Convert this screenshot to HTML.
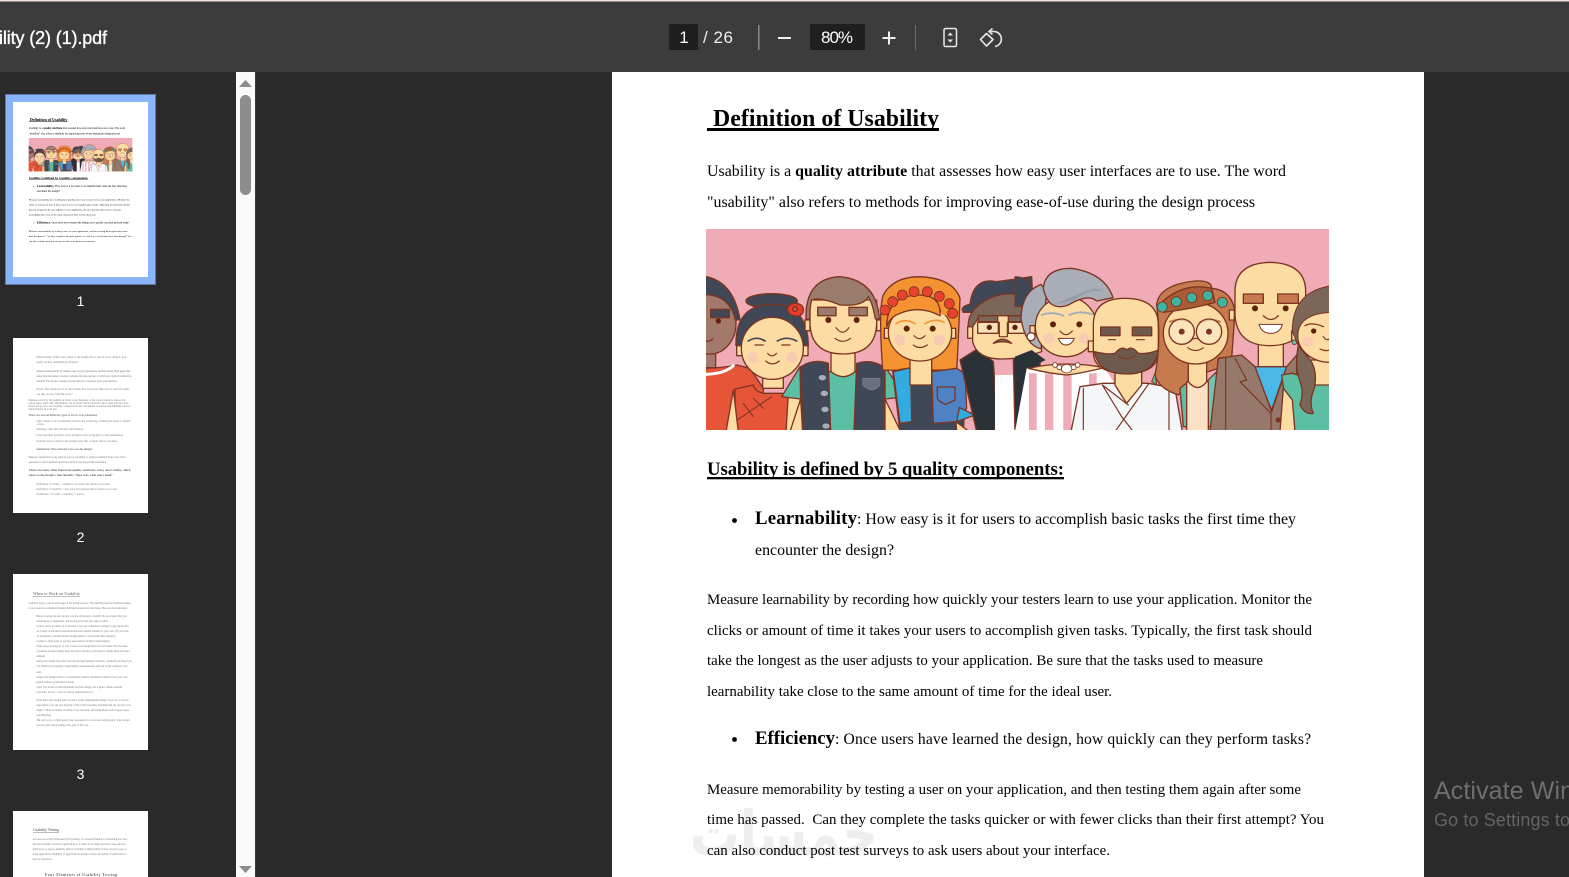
<!DOCTYPE html>
<html lang="en">
<head>
<meta charset="utf-8">
<title>Usability PDF</title>
<style>
html,body{margin:0;padding:0;width:1569px;height:877px;overflow:hidden;background:#2a2a2b}
svg{display:block}
.b{font-family:"Liberation Serif",serif;font-size:15.9px;fill:#000}
.c{font-size:14.9px}
.t{font-family:"Liberation Serif",serif;font-size:2.6px;fill:#777}
.u{font-family:"Liberation Sans",sans-serif;fill:#fff}
</style>
</head>
<body>
<svg xmlns="http://www.w3.org/2000/svg" width="1569" height="877" viewBox="0 0 1569 877">
<defs>
<filter id="soft" filterUnits="userSpaceOnUse" x="0" y="0" width="1569" height="877"><feGaussianBlur stdDeviation="0.3"/></filter>
<clipPath id="artclip"><rect x="706" y="229" width="623" height="201"/></clipPath>
<clipPath id="thumbs"><rect x="0" y="72" width="236" height="805"/></clipPath>
<clipPath id="titleclip"><rect x="0" y="0" width="200" height="72"/></clipPath>
<g id="art" clip-path="url(#artclip)">
<rect x="706" y="229" width="623" height="201" fill="#efabb6"/>
<!-- left half -->
<g transform="translate(700 225) scale(.33333)" stroke="#7b3420" stroke-width="4" stroke-linejoin="round" stroke-linecap="round">
<!-- person 1 -->
<path d="M0 430Q60 430 110 420L150 430L190 490V620H0Z" fill="#e65438"/>
<path d="M0 448Q70 450 100 422" fill="none" stroke="#fff" stroke-width="9"/>
<rect x="0" y="380" width="47" height="48" fill="#a2796a"/>
<ellipse cx="30" cy="295" rx="78" ry="92" fill="#a2796a"/>
<path d="M0 152Q100 160 120 285L106 285Q90 205 0 208Z" fill="#3f4756"/>
<rect x="32" y="253" width="56" height="25" fill="#3f4756"/>
<circle cx="55" cy="288" r="8" fill="#5e2010" stroke="none"/>
<path d="M18 348Q30 350 38 342" fill="none"/>
<!-- person 2 -->
<ellipse cx="215" cy="228" rx="77" ry="22" fill="#3f4756"/>
<path d="M108 362Q105 240 215 238Q325 240 325 365Z" fill="#3f4756"/>
<rect x="110" y="362" width="16" height="30" fill="#fddca4"/>
<rect x="308" y="362" width="16" height="30" fill="#fddca4"/>
<rect x="188" y="450" width="62" height="40" fill="#fddca4"/>
<path d="M105 492L160 480Q165 500 190 505H245L270 510L265 620H105Z" fill="#e65438"/>
<path d="M100 495L78 620H115Z" fill="#fddca4"/>
<path d="M265 505L258 620H305L300 520Z" fill="#fddca4"/>
<ellipse cx="217" cy="370" rx="93" ry="93" fill="#fddca4"/>
<path d="M145 348Q170 332 195 348M232 348Q260 332 290 348" fill="none" stroke="#3f4756" stroke-width="5"/>
<path d="M165 360H190M245 360H270M203 385Q215 400 230 385M197 408Q217 425 238 408" fill="none" stroke-width="3.5"/>
<circle cx="158" cy="397" r="17" fill="#f8ccb0" stroke="none"/>
<circle cx="276" cy="397" r="17" fill="#f8ccb0" stroke="none"/>
<path d="M262 250Q270 232 290 235Q312 240 310 258Q305 278 282 272Q262 268 262 250Z" fill="#e63d2c"/>
<circle cx="285" cy="252" r="7" fill="#e65438"/>
<path d="M112 585L215 515M130 535L160 575M160 520L190 550" fill="none" stroke-width="3"/>
<!-- person 3 -->
<path d="M300 425L245 515L302 522Z" fill="#5bbfa3"/>
<path d="M555 425L615 515L555 522Z" fill="#5bbfa3"/>
<path d="M302 522L270 620H308Z" fill="#fddca4"/>
<path d="M555 522V620H602Z" fill="#fddca4"/>
<rect x="385" y="440" width="85" height="180" fill="#5bbfa3"/>
<path d="M393 375H465V440Q430 470 393 440Z" fill="#fddca4"/>
<path d="M303 425Q340 400 385 415L392 620H308Z" fill="#3f4756"/>
<path d="M470 415Q520 400 555 430L552 620H462Z" fill="#3f4756"/>
<g fill="#a9adb8" stroke="none">
<ellipse cx="367" cy="458" rx="11" ry="8"/><ellipse cx="373" cy="505" rx="11" ry="8"/><ellipse cx="375" cy="553" rx="11" ry="8"/><ellipse cx="378" cy="603" rx="11" ry="8"/>
</g>
<path d="M488 460H540V480Q515 510 488 480Z" fill="#6a7080" stroke="#7a7f8c" stroke-width="2"/>
<rect x="315" y="285" width="15" height="32" fill="#fddca4"/>
<rect x="530" y="285" width="15" height="32" fill="#fddca4"/>
<path d="M330 225V290Q330 387 430 387Q530 387 530 290V225Z" fill="#fddca4"/>
<path d="M318 282Q315 160 420 155Q530 165 538 282L526 282Q518 235 505 215Q490 245 420 240Q360 215 335 225Q328 250 330 282Z" fill="#9a7b6c"/>
<rect x="353" y="247" width="55" height="25" fill="#9a7b6c"/>
<rect x="447" y="247" width="55" height="25" fill="#9a7b6c"/>
<circle cx="385" cy="285" r="9" fill="#5e2010" stroke="none"/>
<circle cx="470" cy="285" r="9" fill="#5e2010" stroke="none"/>
<path d="M408 308Q428 335 447 308M405 340Q428 358 452 340" fill="none" stroke-width="3.5"/>
<!-- person 4 -->
<path d="M548 435Q535 250 550 210Q580 155 660 155Q760 160 780 220Q775 350 770 440Z" fill="#f59232"/>
<path d="M578 440Q620 425 640 435H690L770 435L800 445L790 620H600Z" fill="#3f4756"/>
<path d="M580 440L632 428L635 590L600 595Z" fill="#33ace0"/>
<path d="M695 440L770 430L795 445L800 550L770 590L700 595Z" fill="#4f82c4"/>
<path d="M778 548L825 570L770 590Z" fill="#33ace0"/>
<path d="M712 486H765V525L738 538Q712 530 712 515Z" fill="#4f82c4"/>
<path d="M768 590L808 620H770Z" fill="#fddca4"/>
<rect x="630" y="400" width="65" height="80" fill="#fddca4"/>
<rect x="553" y="310" width="15" height="30" fill="#fddca4"/>
<rect x="752" y="310" width="15" height="30" fill="#fddca4"/>
<ellipse cx="660" cy="322" rx="95" ry="86" fill="#fddca4"/>
<path d="M560 305Q560 215 650 210Q725 208 720 272Q660 240 600 265Q570 275 560 305Z" fill="#f59232"/>
<path d="M722 268Q760 270 765 305L772 240L730 215Z" fill="#f59232" stroke="none"/>
<g fill="#e8432f" stroke-width="2.5">
<circle cx="555" cy="255" r="15"/><circle cx="578" cy="230" r="15"/><circle cx="607" cy="210" r="15"/><circle cx="642" cy="200" r="15"/><circle cx="682" cy="200" r="15"/><circle cx="718" cy="214" r="15"/><circle cx="748" cy="236" r="15"/><circle cx="758" cy="265" r="15"/>
</g>
<path d="M588 296Q615 278 645 296M675 296Q705 278 732 292" fill="none" stroke="#f59232" stroke-width="5"/>
<circle cx="620" cy="311" r="9" fill="#5e2010" stroke="none"/>
<circle cx="698" cy="311" r="9" fill="#5e2010" stroke="none"/>
<circle cx="600" cy="345" r="17" fill="#f8ccb0" stroke="none"/>
<circle cx="718" cy="345" r="17" fill="#f8ccb0" stroke="none"/>
<path d="M642 332Q658 350 675 332M640 360Q660 375 682 360" fill="none" stroke-width="3.5"/>
<!-- person 5 -->
<path d="M780 405L835 370L880 410L895 620H830Z" fill="#2b3038"/>
<rect x="885" y="450" width="58" height="170" fill="#fff" stroke="none"/>
<path d="M940 400L1020 400V620H945Z" fill="#2b3038"/>
<path d="M810 238Q820 155 890 170Q930 165 995 155L1000 260L790 262Q778 245 810 238Z" fill="#3f4756"/>
<rect x="803" y="305" width="15" height="35" fill="#fddca4"/>
<path d="M818 270V350Q830 402 905 402Q965 402 1025 380V270Z" fill="#fddca4"/>
<path d="M805 305Q800 250 880 215Q930 200 960 212Q1000 210 1025 235V272H840L818 305Z" fill="#7c6659"/>
<rect x="835" y="272" width="58" height="18" fill="#7c6659"/>
<rect x="925" y="272" width="58" height="18" fill="#7c6659"/>
<rect x="833" y="292" width="62" height="33" fill="#f8e0b8"/>
<rect x="925" y="292" width="60" height="33" fill="#f8e0b8"/>
<circle cx="868" cy="307" r="8" fill="#5e2010" stroke="none"/>
<circle cx="945" cy="307" r="8" fill="#5e2010" stroke="none"/>
<path d="M898 292V335H922V292" fill="none" stroke-width="3.5"/>
<path d="M880 355Q908 330 935 355Q908 345 880 355Z" fill="#7c6659"/>
</g>
<!-- right half -->
<g transform="translate(1015 225) scale(.33333)" stroke="#7b3420" stroke-width="4" stroke-linejoin="round" stroke-linecap="round">
<!-- p5 remainder -->
<path d="M0 155Q40 155 52 190L40 245H0Z" fill="#3f4756" stroke-width="3"/>
<path d="M0 395L50 375L92 405L30 435L0 545Z" fill="#2b3038" stroke="none"/>
<!-- person 6 -->
<path d="M78 178Q20 200 18 280Q30 360 78 372L95 200Z" fill="#a8adb6"/>
<path d="M35 430Q150 420 270 430L295 470V620H0Z" fill="#fff" stroke="none"/>
<g fill="#efabb6" stroke="none"><rect x="42" y="445" width="23" height="175"/><rect x="90" y="445" width="25" height="175"/><rect x="145" y="445" width="25" height="175"/><rect x="222" y="445" width="23" height="175"/></g>
<path d="M40 430Q150 405 268 428Q200 445 155 450Q100 445 40 430Z" fill="#fddca4"/>
<rect x="45" y="302" width="15" height="28" fill="#fddca4"/>
<circle cx="48" cy="335" r="12" fill="#fff"/>
<rect x="222" y="345" width="15" height="32" fill="#fddca4"/>
<ellipse cx="153" cy="305" rx="92" ry="90" fill="#fddca4"/>
<path d="M85 190Q90 130 170 130Q270 145 294 218L245 228Q220 205 160 240Q100 262 85 190Z" fill="#a8adb6"/>
<path d="M120 238Q190 205 240 190L270 200Q220 190 180 225Z" fill="#969ca7" stroke="none"/>
<path d="M80 270Q110 258 145 272M163 270Q195 255 230 268" fill="none" stroke="#a8adb6" stroke-width="6"/>
<circle cx="114" cy="298" r="9" fill="#5e2010" stroke="none"/>
<circle cx="193" cy="298" r="9" fill="#5e2010" stroke="none"/>
<circle cx="102" cy="340" r="16" fill="#f8ccb0" stroke="none"/>
<circle cx="208" cy="340" r="16" fill="#f8ccb0" stroke="none"/>
<path d="M135 318Q153 340 172 318" fill="none" stroke-width="3.5"/>
<path d="M130 340H178Q170 360 153 360Q138 360 130 340Z" fill="#fff" stroke-width="3"/>
<g fill="#fff" stroke-width="2.5"><circle cx="120" cy="420" r="7"/><circle cx="133" cy="427" r="7"/><ellipse cx="155" cy="431" rx="16" ry="13"/><circle cx="176" cy="427" r="7"/><circle cx="188" cy="420" r="7"/></g>
<!-- person 7 -->
<path d="M195 485L265 475H400L480 490L502 620H168Z" fill="#f4f6f8"/>
<path d="M300 430H380V480L335 535L300 480Z" fill="#fddca4"/>
<path d="M262 480L320 575M400 478L300 620M205 490V620M462 490V620M320 575L355 620M262 480L340 540" fill="none" stroke-width="3.5"/>
<rect x="220" y="348" width="16" height="32" fill="#fddca4"/>
<rect x="430" y="318" width="16" height="60" fill="#fddca4"/>
<path d="M235 300Q235 220 330 220Q430 220 430 300V380Q430 445 335 445Q235 445 235 380Z" fill="#fddca4"/>
<path d="M238 380Q280 390 300 385Q320 360 335 375Q350 360 370 385Q400 388 430 375Q420 447 335 447Q250 447 238 380Z" fill="#6e5a4e"/>
<path d="M310 392Q335 410 360 392" fill="none" stroke-width="3.5"/>
<rect x="257" y="306" width="58" height="26" fill="#6e5a4e"/>
<rect x="352" y="306" width="58" height="26" fill="#6e5a4e"/>
<path d="M280 344H302M364 344H388" fill="none" stroke-width="3.5"/>
<!-- person 8 -->
<path d="M425 240Q430 180 540 168Q590 165 590 190Q650 195 660 260L650 400L640 420L580 440H520V480L490 510Q430 490 420 450Q440 350 425 240Z" fill="#c87a4f"/>
<path d="M410 470L420 445L425 480Z" fill="#5bbfa3" stroke-width="3"/>
<path d="M495 490L520 470V605H505Z" fill="#5bbfa3"/>
<path d="M575 470L605 440L600 605H580Z" fill="#6fc4b0"/>
<path d="M515 470H580V620H515Z" fill="#fae0c4"/>
<path d="M520 405H575V470Q548 505 520 470Z" fill="#fddca4"/>
<rect x="643" y="255" width="15" height="30" fill="#fddca4"/>
<ellipse cx="542" cy="325" rx="97" ry="92" fill="#fddca4"/>
<path d="M432 240Q500 170 590 190L600 232Q530 252 445 262Z" fill="#a95c35"/>
<g fill="#3cb5a0" stroke-width="2.5"><circle cx="442" cy="246" r="15"/><circle cx="484" cy="230" r="15"/><circle cx="530" cy="218" r="15"/><circle cx="578" cy="212" r="15"/><circle cx="622" cy="232" r="15"/></g>
<path d="M465 290Q495 278 525 292M555 292Q585 278 615 290" fill="none" stroke="#c87a4f" stroke-width="6"/>
<circle cx="500" cy="320" r="38" fill="#f8e8c8" fill-opacity=".7"/>
<circle cx="582" cy="320" r="38" fill="#f8e8c8" fill-opacity=".7"/>
<circle cx="500" cy="320" r="9" fill="#7b3420" stroke="none"/>
<circle cx="582" cy="320" r="9" fill="#7b3420" stroke="none"/>
<path d="M525 350Q542 330 558 350M518 368Q542 385 565 368" fill="none" stroke-width="3.5"/>
<!-- person 9 -->
<rect x="730" y="345" width="75" height="85" fill="#fddca4"/>
<path d="M715 425H815L770 555Z" fill="#4bb8e8"/>
<path d="M610 400L680 390L720 425L770 560L815 425L845 390V620H585Z" fill="#96796a"/>
<path d="M660 400L695 465L675 470L768 565M632 400V620M768 565V620" fill="none" stroke-width="3.5"/>
<circle cx="790" cy="585" r="8" fill="#7b3420" stroke="none"/>
<path d="M660 200Q660 115 765 112Q872 115 872 200V270Q865 362 765 362Q665 362 660 270Z" fill="#fddca4"/>
<rect x="685" y="207" width="60" height="28" fill="#c87a4f"/>
<rect x="788" y="207" width="62" height="28" fill="#c87a4f"/>
<circle cx="720" cy="250" r="9" fill="#5e2010" stroke="none"/>
<circle cx="812" cy="250" r="9" fill="#5e2010" stroke="none"/>
<path d="M745 272Q768 295 790 272" fill="none" stroke-width="4"/>
<path d="M732 298H802Q795 325 767 325Q740 325 732 298Z" fill="#fff" stroke-width="3"/>
<!-- person 10 -->
<path d="M800 450L830 445L950 475V620H840L810 520Z" fill="#5bbfa3"/>
<path d="M805 490L795 620H840L832 525Z" fill="#fddca4"/>
<rect x="880" y="405" width="70" height="75" fill="#fddca4"/>
<path d="M850 362Q838 420 855 470Q868 500 855 540Q870 570 895 565Q880 530 898 490Q910 430 878 395Z" fill="#7c6659"/>
<rect x="830" y="318" width="15" height="28" fill="#fddca4"/>
<circle cx="838" cy="352" r="7" fill="#5bbfa3" stroke-width="2.500"/>
<ellipse cx="945" cy="332" rx="97" ry="80" fill="#fddca4"/>
<path d="M850 362L848 320Q860 265 950 262V182Q830 200 832 320Z" fill="#7c6659" stroke-width="3"/>
<path d="M870 302Q890 290 925 305" fill="none" stroke-width="4"/>
<circle cx="896" cy="318" r="8" fill="#5e2010" stroke="none"/>
<circle cx="878" cy="350" r="16" fill="#f8ccb0" stroke="none"/>
<path d="M915 372Q930 380 945 375M925 335Q935 350 945 340" fill="none" stroke-width="3.500"/>
</g>
</g>
<g id="pg">
<g transform="translate(1 0)">
<text class="b" x="706" y="126" textLength="232" lengthAdjust="spacing" xml:space="preserve" style="font-size:23.8px;font-weight:700"> Definition of Usability</text>
<rect x="706" y="128" width="232" height="3" fill="#000"/>
<text class="b" x="706" y="176" textLength="579" lengthAdjust="spacing">Usability is a <tspan font-weight="700">quality attribute</tspan> that assesses how easy user interfaces are to use. The word</text>
<text class="b" x="706" y="207" textLength="548" lengthAdjust="spacing">"usability" also refers to methods for improving ease-of-use during the design process</text>
<text class="b" x="706" y="475" textLength="357" lengthAdjust="spacing" style="font-size:18.8px;font-weight:700">Usability is defined by 5 quality components:</text>
<rect x="706" y="477" width="357" height="2.300" fill="#000"/>
<circle cx="733.500" cy="520.500" r="2.400" fill="#000"/>
<text class="b" x="754" y="524" textLength="102" lengthAdjust="spacing" style="font-size:18.800px;font-weight:700">Learnability</text>
<text class="b" x="856" y="524" textLength="439" lengthAdjust="spacing">: How easy is it for users to accomplish basic tasks the first time they</text>
<text class="b" x="754" y="555" textLength="139" lengthAdjust="spacing">encounter the design?</text>
<text class="b c" x="706" y="604" textLength="605" lengthAdjust="spacing">Measure learnability by recording how quickly your testers learn to use your application. Monitor the</text>
<text class="b c" x="706" y="635" textLength="605" lengthAdjust="spacing">clicks or amount of time it takes your users to accomplish given tasks. Typically, the first task should</text>
<text class="b c" x="706" y="665" textLength="556" lengthAdjust="spacing">take the longest as the user adjusts to your application. Be sure that the tasks used to measure</text>
<text class="b c" x="706" y="696" textLength="405" lengthAdjust="spacing">learnability take close to the same amount of time for the ideal user.</text>
<circle cx="733.500" cy="739.500" r="2.400" fill="#000"/>
<text class="b" x="754" y="744" textLength="80" lengthAdjust="spacing" style="font-size:18.800px;font-weight:700">Efficiency</text>
<text class="b" x="834" y="744" textLength="476" lengthAdjust="spacing" style="font-size:15.600px">: Once users have learned the design, how quickly can they perform tasks?</text>
<text class="b c" x="706" y="794" textLength="594" lengthAdjust="spacing">Measure memorability by testing a user on your application, and then testing them again after some</text>
<text class="b c" x="706" y="824" textLength="617" lengthAdjust="spacing" xml:space="preserve">time has passed.  Can they complete the tasks quicker or with fewer clicks than their first attempt? You</text>
<text class="b c" x="706" y="855" textLength="403" lengthAdjust="spacing">can also conduct post test surveys to ask users about your interface.</text>
</g>
<use href="#art"/>
</g>
</defs>

<!-- backdrop -->
<rect width="1569" height="877" fill="#2a2a2b"/>

<!-- main page -->
<rect x="612" y="72" width="812" height="805" fill="#fff"/>
<text x="784" y="855" text-anchor="middle" textLength="188" lengthAdjust="spacingAndGlyphs" style="font-family:'DejaVu Sans',sans-serif;font-size:62px;font-weight:700" fill="#eeeeee">خمسات</text>
<g filter="url(#soft)"><use href="#pg"/></g>

<!-- sidebar -->
<g clip-path="url(#thumbs)">
<rect x="5.500" y="94.500" width="150" height="190" fill="#8ab4f8" stroke="#5f78a8"/>
<rect x="13" y="102" width="135" height="175" fill="#fff"/>
<g filter="url(#soft)">
<g transform="translate(13 102) scale(.1665) translate(-612 -13)"><use href="#pg"/></g>
</g>
<text class="u" x="80.500" y="306" text-anchor="middle" font-size="14">1</text>

<rect x="13" y="338" width="135" height="175" fill="#fff"/>
<rect x="13" y="574" width="135" height="176" fill="#fff"/>
<rect x="13" y="811" width="135" height="70" fill="#fff"/>
<g filter="url(#soft)">
<text class="t" x="36.500" y="358" textLength="90" lengthAdjust="spacing">Memorability: When users return to the design after a period of not using it, how</text>
<text class="t" x="36.500" y="363" textLength="42" lengthAdjust="spacing">easily can they reestablish proficiency?</text>
<text class="t" x="36.500" y="372" textLength="94" lengthAdjust="spacing">Measure memorability by testing a user on your application, and then testing them again after</text>
<text class="t" x="36.500" y="377" textLength="95" lengthAdjust="spacing">some time has passed. Can they complete the tasks quicker or with fewer clicks than their first</text>
<text class="t" x="36.500" y="382" textLength="81" lengthAdjust="spacing">attempt? You can also conduct post test surveys to ask users about your interface.</text>
<text class="t" x="36.500" y="390" textLength="93" lengthAdjust="spacing">Errors: How many errors do users make, how severe are these errors, and how easily</text>
<text class="t" x="36.500" y="395" textLength="36" lengthAdjust="spacing">can they recover from the errors?</text>
<text class="t" x="28.500" y="401" textLength="97" lengthAdjust="spacing">Measure errors by the number of times a user hesitates or the correct menu to choose the</text>
<text class="t" x="28.500" y="404" textLength="100" lengthAdjust="spacing">action takes, what other information can be found. Notice that the task is done and note how</text>
<text class="t" x="28.500" y="407" textLength="102" lengthAdjust="spacing">much will go on to successfully complete the task; the number of actions and highlight areas of</text>
<text class="t" x="28.500" y="410" textLength="29" lengthAdjust="spacing">improvement in your site.</text>
<text class="t" x="28.500" y="416" textLength="69" lengthAdjust="spacing" font-weight="700">There are several different types of errors to be identified:</text>
<text class="t" x="36.500" y="422" textLength="94" lengthAdjust="spacing">Slips: These occur accidentally because the wrong key, clicking the menu or similar</text>
<text class="t" x="36.500" y="425" textLength="8" lengthAdjust="spacing">action.</text>
<text class="t" x="36.500" y="430" textLength="47" lengthAdjust="spacing">Mistakes: users enter incorrect information.</text>
<text class="t" x="36.500" y="436" textLength="87" lengthAdjust="spacing">Users find their problems. Users navigate to the wrong place to find information.</text>
<text class="t" x="36.500" y="442" textLength="81" lengthAdjust="spacing">Scenario errors: failure in the testing script that wrongly affects outcomes.</text>
<text class="t" x="36.500" y="450" textLength="56" lengthAdjust="spacing" font-weight="700">Satisfaction: How pleasant is it to use the design?</text>
<text class="t" x="28.500" y="458" textLength="97" lengthAdjust="spacing">Measure satisfaction at any point in your accessibility to analyze feedback from users about</text>
<text class="t" x="28.500" y="463" textLength="78" lengthAdjust="spacing">questions to collect feedback about how much it was enjoyed the experience.</text>
<text class="t" x="28.500" y="471" textLength="102" lengthAdjust="spacing" font-weight="700" style="font-size:3.100px;fill:#666">There are many other important quality attributes. A key one is utility, which</text>
<text class="t" x="28.500" y="476" textLength="84" lengthAdjust="spacing" font-weight="700" style="font-size:3.100px;fill:#666">refers to the design's functionality: Does it do what users need?</text>
<text class="t" x="36.500" y="485" textLength="74" lengthAdjust="spacing">Definition of Utility = whether it provides the features you need.</text>
<text class="t" x="36.500" y="490" textLength="81" lengthAdjust="spacing">Definition of Usability = how easy and pleasant these features are to use.</text>
<text class="t" x="36.500" y="495" textLength="48" lengthAdjust="spacing">Definition of Useful = usability + utility.</text>

<text class="t" x="33" y="595" textLength="47" lengthAdjust="spacing" style="font-size:4px;text-decoration:underline;fill:#555">When to Work on Usability</text>
<text class="t" x="28.500" y="604" textLength="102" lengthAdjust="spacing">Usability plays a role in each stage of the design process. The resulting need for multiple studies</text>
<text class="t" x="28.500" y="609" textLength="99" lengthAdjust="spacing">is one reason I recommend making individual studies fast and cheap. Here are the main steps:</text>
<text class="t" x="36.500" y="617" textLength="90" lengthAdjust="spacing">Before starting the new design, test the old design to identify the good parts that you</text>
<text class="t" x="36.500" y="622" textLength="72" lengthAdjust="spacing">should keep or emphasize, and the bad parts that give users trouble.</text>
<text class="t" x="36.500" y="627" textLength="92" lengthAdjust="spacing">Unless you're working on an intranet, test your competitors' designs to get cheap data</text>
<text class="t" x="36.500" y="632" textLength="92" lengthAdjust="spacing">on a range of alternative interfaces that have similar features to your own. (If you work</text>
<text class="t" x="36.500" y="637" textLength="79" lengthAdjust="spacing">on an intranet, read the intranet design annual to learn from other designs.)</text>
<text class="t" x="36.500" y="642" textLength="74" lengthAdjust="spacing">Conduct a field study to see how users behave in their natural habitat.</text>
<text class="t" x="36.500" y="647" textLength="91" lengthAdjust="spacing">Make paper prototypes of one or more new design ideas and test them. The less time</text>
<text class="t" x="36.500" y="652" textLength="93" lengthAdjust="spacing">you invest in these design ideas the better, because you'll need to change them all based</text>
<text class="t" x="36.500" y="657" textLength="9" lengthAdjust="spacing">on the test.</text>
<text class="t" x="36.500" y="662" textLength="95" lengthAdjust="spacing">Refine the design ideas that test best through multiple iterations, gradually moving from</text>
<text class="t" x="36.500" y="667" textLength="91" lengthAdjust="spacing">low-fidelity prototyping to high-fidelity representations that run on the computer. Test</text>
<text class="t" x="36.500" y="673" textLength="5" lengthAdjust="spacing">each.</text>
<text class="t" x="36.500" y="678" textLength="91" lengthAdjust="spacing">Inspect the design relative to established usability guidelines whether from your own</text>
<text class="t" x="36.500" y="683" textLength="38" lengthAdjust="spacing">earlier studies or published research.</text>
<text class="t" x="36.500" y="688" textLength="86" lengthAdjust="spacing">Once you decide on and implement the final design, test it again. Subtle usability</text>
<text class="t" x="36.500" y="693" textLength="57" lengthAdjust="spacing">problems always creep in during implementation.</text>
<text class="t" x="36.500" y="701" textLength="92" lengthAdjust="spacing">Don't defer user testing until you have a fully implemented design. If you do, it will be</text>
<text class="t" x="36.500" y="706" textLength="95" lengthAdjust="spacing">impossible to fix the vast majority of the critical usability problems that the test uncovers.</text>
<text class="t" x="36.500" y="711" textLength="93" lengthAdjust="spacing">Many of these problems are likely to be structural, and fixing them would require major</text>
<text class="t" x="36.500" y="716" textLength="15" lengthAdjust="spacing">rearchitecting.</text>
<text class="t" x="36.500" y="721" textLength="93" lengthAdjust="spacing">The only way to a high-quality user experience is to start user testing early in the design</text>
<text class="t" x="36.500" y="726" textLength="52" lengthAdjust="spacing">process and to keep testing every step of the way.</text>

<text class="t" x="33" y="831" textLength="26" lengthAdjust="spacing" style="font-size:4px;text-decoration:underline;fill:#555">Usability Testing</text>
<text class="t" x="32.500" y="840" textLength="95" lengthAdjust="spacing">Also known as User Experience (UX) Testing, is a research method for measuring how easy</text>
<text class="t" x="32.500" y="845" textLength="93" lengthAdjust="spacing">and user-friendly a software application is. A small set of target end users, use software</text>
<text class="t" x="32.500" y="850" textLength="94" lengthAdjust="spacing">application to expose usability defects. Usability testing mainly focuses on user's ease of</text>
<text class="t" x="32.500" y="855" textLength="94" lengthAdjust="spacing">using application, flexibility of application to handle controls and ability of application to</text>
<text class="t" x="32.500" y="860" textLength="20" lengthAdjust="spacing">meet its objectives.</text>
<text class="t" x="45" y="876" textLength="72" lengthAdjust="spacing" font-weight="700" style="font-size:3.800px;fill:#666">Four Elements of Usability Testing</text>
</g>
<text class="u" x="80.500" y="542" text-anchor="middle" font-size="14">2</text>
<text class="u" x="80.500" y="779" text-anchor="middle" font-size="14">3</text>
</g>

<!-- scrollbar -->
<rect x="236" y="72" width="19" height="805" fill="#fafafa"/>
<rect x="255" y="72" width="1" height="805" fill="#3a3a3c"/>
<rect x="240" y="95" width="11" height="100" rx="5.500" fill="#8d8d8d"/>
<path d="M239 87L245.500 80L252 87Z" fill="#8d8d8d"/>
<path d="M239 866L245.500 873L252 866Z" fill="#8d8d8d"/>

<!-- toolbar -->
<rect x="0" y="0" width="1569" height="72" fill="#3c3c3c"/>
<rect x="0" y="0" width="1569" height="1.500" fill="#f3e3df"/>
<g clip-path="url(#titleclip)">
<text class="u" x="-1" y="44" font-size="18" stroke="#fff" stroke-width=".35" textLength="108" lengthAdjust="spacing">ility (2) (1).pdf</text>
</g>
<rect x="669" y="24" width="29" height="26" fill="#1f1f1f"/>
<text class="u" x="684" y="43" text-anchor="middle" font-size="17">1</text>
<text class="u" x="703" y="43" font-size="17" textLength="30" lengthAdjust="spacing" style="fill:#f0f0f0">/ 26</text>
<rect x="758" y="25" width="1.500" height="25" fill="#8a8a8a"/>
<rect x="778" y="37" width="13" height="2" fill="#f0f0f0"/>
<rect x="810" y="24" width="55" height="26" fill="#1f1f1f"/>
<text class="u" x="837" y="43" text-anchor="middle" font-size="17" textLength="32" lengthAdjust="spacing">80%</text>
<path d="M882.500 38H895.500M889 31.500V44.500" stroke="#f0f0f0" stroke-width="2" fill="none"/>
<rect x="915" y="25" width="1" height="25" fill="#6f6f6f"/>
<rect x="944" y="28.500" width="12.500" height="18" rx="1.500" fill="none" stroke="#e8e8e8" stroke-width="1.500"/>
<path d="M947.500 35.500L950.250 32.500L953 35.500ZM947.500 39.500L950.250 42.500L953 39.500Z" fill="#e8e8e8"/>
<path d="M986.500 33.500L993 39.500L986.500 46L980.500 39.500Z" fill="none" stroke="#e8e8e8" stroke-width="1.600" stroke-linejoin="round"/>
<path d="M989 31.500H992.500A7.500 7.500 0 0 1 995 46.500" fill="none" stroke="#e8e8e8" stroke-width="1.600"/>
<path d="M992.500 28.500L989 31.500L992.500 34.500" fill="none" stroke="#e8e8e8" stroke-width="1.600"/>

<!-- activation watermark -->
<text x="1434" y="799" font-size="25" textLength="140" lengthAdjust="spacing" style="font-family:'Liberation Sans',sans-serif" fill="#6f6f6f">Activate Win</text>
<text x="1434" y="826" font-size="18" textLength="136" lengthAdjust="spacing" style="font-family:'Liberation Sans',sans-serif" fill="#646464">Go to Settings to</text>
</svg>
</body>
</html>
